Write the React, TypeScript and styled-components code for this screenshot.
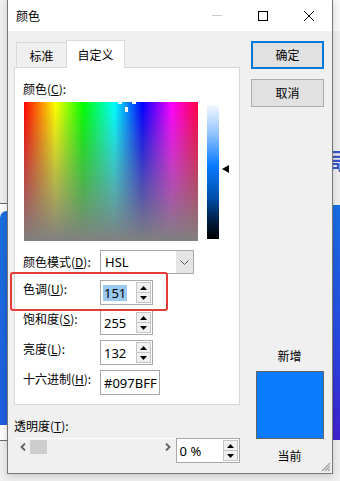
import React from 'react';
import styled, { createGlobalStyle } from 'styled-components';

const Global = createGlobalStyle`
  html, body { margin: 0; padding: 0; }
  body {
    width: 340px; height: 481px; overflow: hidden; background: #f0f0f0;
    font-family: "Noto Sans CJK SC", "Noto Sans", sans-serif;
    font-size: 12px; color: #000;
  }
  #root { width: 340px; height: 481px; }
`;

const Page = styled.div`
  display: flex;
  align-items: flex-start;
  width: 340px;
  height: 481px;
  overflow: hidden;
  background: #f0f0f0;
`;

const Strip = styled.div<{ $w: number }>`
  width: ${(p) => p.$w}px;
  flex: none;
  height: 481px;
  display: flex;
  flex-direction: column;
  overflow: hidden;
`;

const Band = styled.div<{ $h: number; $bg: string; $radius?: string }>`
  height: ${(p) => p.$h}px;
  flex: none;
  background: ${(p) => p.$bg};
  border-radius: ${(p) => p.$radius || '0'};
  overflow: hidden;
`;

const PeekGlyph = styled.div`
  margin: 116px 0 0 -9px;
  font-size: 22px;
  font-weight: 700;
  line-height: 24px;
  color: #3a56c8;
  white-space: nowrap;
`;

const Dialog = styled.div`
  position: relative;
  z-index: 1;
  flex: none;
  width: 326px;
  height: 474px;
  box-sizing: border-box;
  border: 1px solid #767676;
  border-top: 0;
  background: #f0f0f0;
  box-shadow: 0 2px 8px rgba(0, 0, 0, 0.18);
  display: flex;
  flex-direction: column;
`;

const TitleBar = styled.div`
  height: 31px;
  flex: none;
  background: #fff;
  display: flex;
  align-items: center;
  padding-left: 8px;
`;

const Title = styled.div`
  flex: 1;
  font-size: 12px;
  line-height: 16px;
`;

const WinBtn = styled.div`
  width: 46px;
  height: 31px;
  display: flex;
  align-items: center;
  justify-content: center;
`;

const Body = styled.div`
  flex: 1;
  display: flex;
`;

const LeftCol = styled.div`
  width: 232px;
  padding: 9px 0 0 6px;
  box-sizing: border-box;
  display: flex;
  flex-direction: column;
`;

const TabRow = styled.div`
  height: 27px;
  display: flex;
  align-items: flex-end;
  padding-left: 2px;
`;

const Tab = styled.div<{ $active?: boolean }>`
  position: relative;
  z-index: ${(p) => (p.$active ? 2 : 1)};
  box-sizing: border-box;
  height: ${(p) => (p.$active ? 28 : 25)}px;
  margin-bottom: ${(p) => (p.$active ? -1 : 0)}px;
  width: ${(p) => (p.$active ? 59 : 51)}px;
  margin-left: ${(p) => (p.$active ? -1 : 0)}px;
  border: 1px solid #d9d9d9;
  border-bottom: 0;
  background: ${(p) => (p.$active ? '#fff' : '#f0f0f0')};
  display: flex;
  justify-content: center;
  padding-top: ${(p) => (p.$active ? 6 : 5)}px;
  line-height: 16px;
`;

const Panel = styled.div`
  box-sizing: border-box;
  width: 226px;
  height: 338px;
  border: 1px solid #d9d9d9;
  background: #fff;
  padding: 13px 0 0 8px;
  display: flex;
  flex-direction: column;
`;

const Label = styled.div`
  line-height: 16px;
  white-space: nowrap;
`;

const SpectrumRow = styled.div`
  display: flex;
  margin-top: 5px;
`;

const Spectrum = styled.div`
  position: relative;
  width: 174px;
  height: 139px;
  margin-left: 1px;
  background: linear-gradient(to bottom, rgba(128, 128, 128, 0), rgb(128, 128, 128)),
    linear-gradient(
      to right,
      #ff0000 0%,
      #ffff00 18%,
      #00ff00 34%,
      #00ffff 52%,
      #0000ff 68%,
      #ff00ff 85%,
      #ff0040 100%
    );
`;

const MarkerBit = styled.div<{ $x: number; $y: number; $w: number; $h: number }>`
  position: absolute;
  left: ${(p) => p.$x}px;
  top: ${(p) => p.$y}px;
  width: ${(p) => p.$w}px;
  height: ${(p) => p.$h}px;
  background: #fff;
`;

const LumBar = styled.div`
  width: 12px;
  height: 134px;
  margin: 3px 0 0 9px;
  background: linear-gradient(to bottom, #f4f8ff 0%, #8ec2ff 22%, #097bff 45%, #0052b0 68%, #001a3a 88%, #000 100%);
`;

const LumArrow = styled.div`
  width: 0;
  height: 0;
  margin: 63px 0 0 3px;
  border-top: 4px solid transparent;
  border-bottom: 4px solid transparent;
  border-right: 7px solid #000;
`;

const Fields = styled.div`
  display: flex;
  flex-direction: column;
  gap: 6px;
  margin-top: 9px;
`;

const FieldRow = styled.div<{ $center?: boolean }>`
  display: flex;
  align-items: ${(p) => (p.$center ? 'center' : 'flex-start')};
  height: 24px;
`;

const FieldLabel = styled.div`
  width: 77px;
  line-height: 18px;
  white-space: nowrap;
`;

const Select = styled.div`
  box-sizing: border-box;
  width: 94px;
  height: 24px;
  border: 1px solid #a8a8a8;
  background: #fff;
  display: flex;
  align-items: stretch;
`;

const SelectValue = styled.div`
  flex: 1;
  padding-left: 4px;
  display: flex;
  align-items: center;
  font-family: "Noto Sans", sans-serif;
  font-size: 13px;
`;

const SelectBtn = styled.div`
  width: 17px;
  background: #e5e5e5;
  display: flex;
  align-items: center;
  justify-content: center;
`;

const NumBox = styled.div<{ $w: number }>`
  box-sizing: border-box;
  width: ${(p) => p.$w}px;
  height: 25px;
  border: 1px solid #a8a8a8;
  background: #fff;
  display: flex;
  align-items: center;
  padding-left: 2px;
`;

const NumText = styled.span<{ $sel?: boolean }>`
  font-family: "Noto Sans", sans-serif;
  font-size: 13px;
  line-height: 16px;
  padding: 0 1px;
  background: ${(p) => (p.$sel ? '#99c9ef' : 'transparent')};
`;

const Spin = styled.div`
  display: flex;
  flex-direction: column;
  width: 15px;
  height: 21px;
  margin-left: auto;
  margin-right: 1px;
`;

const SpinBtn = styled.div`
  flex: 1;
  box-sizing: border-box;
  border: 1px solid #c6c6c6;
  background: #f0f0f0;
  display: flex;
  align-items: center;
  justify-content: center;
  & + & { border-top: 0; }
`;

const AlphaLabel = styled.div`
  margin-top: 12px;
  line-height: 18px;
`;

const AlphaRow = styled.div`
  display: flex;
  align-items: flex-start;
  margin-top: 3px;
`;

const ScrollTrack = styled.div`
  box-sizing: border-box;
  width: 163px;
  height: 16px;
  border-top: 1px solid #fff;
  display: flex;
  align-items: center;
  padding: 0 5px 0 6px;
`;

const Thumb = styled.div`
  width: 17px;
  height: 14px;
  margin-left: 4px;
  background: #cdcdcd;
`;

const Grow = styled.div`
  flex: 1;
`;

const RightCol = styled.div`
  flex: 1;
  padding: 10px 0 8px 11px;
  display: flex;
  flex-direction: column;
`;

const Button = styled.div<{ $primary?: boolean }>`
  box-sizing: border-box;
  width: 73px;
  height: 28px;
  margin-bottom: 10px;
  background: #e1e1e1;
  border: ${(p) => (p.$primary ? '2px solid #0078d7' : '1px solid #adadad')};
  display: flex;
  align-items: center;
  justify-content: center;
  line-height: 16px;
`;

const PreviewGroup = styled.div`
  margin-top: auto;
  width: 74px;
  display: flex;
  flex-direction: column;
  align-items: center;
  padding-left: 3px;
  box-sizing: border-box;
`;

const PreviewLabel = styled.div`
  line-height: 18px;
`;

const Swatch = styled.div`
  box-sizing: border-box;
  width: 68px;
  height: 68px;
  margin: 6px 0 8px;
  border: 1px solid #646464;
  background: #097bff;
`;

const Grip = styled.svg`
  position: absolute;
  right: 1px;
  bottom: 1px;
`;

const Annotation = styled.div`
  position: absolute;
  left: 2px;
  top: 272px;
  width: 158px;
  height: 39px;
  box-sizing: border-box;
  border: 2px solid #e53b36;
  border-radius: 3px;
  pointer-events: none;
`;

const Tri = ({ up }: { up?: boolean }) => (
  <svg width="7" height="4" viewBox="0 0 7 4">
    <path d={up ? 'M0 4 L3.5 0 L7 4 Z' : 'M0 0 L3.5 4 L7 0 Z'} fill="#000" />
  </svg>
);

const Spinner = () => (
  <Spin>
    <SpinBtn>
      <Tri up />
    </SpinBtn>
    <SpinBtn>
      <Tri />
    </SpinBtn>
  </Spin>
);

const Chevron = ({ left }: { left?: boolean }) => (
  <svg width="6" height="8" viewBox="0 0 6 8">
    <path
      d={left ? 'M5 0.5 L1.5 4 L5 7.5' : 'M1 0.5 L4.5 4 L1 7.5'}
      fill="none"
      stroke="#606060"
      strokeWidth="1.8"
    />
  </svg>
);

export default function App() {
  return (
    <>
      <Global />
      <Page>
        <Strip $w={7}>
          <Band $h={203} $bg="#f0f0f0" />
          <Band $h={1} $bg="#6a6a6a" />
          <Band $h={7} $bg="#fff" />
          <Band $h={214} $bg="linear-gradient(#1a6fe0, #1f5fe0)" $radius="12px 0 0 0" />
          <Band $h={15} $bg="#fff" />
          <Band $h={1} $bg="#6a6a6a" />
          <Band $h={40} $bg="#f0f0f0" />
        </Strip>
        <Dialog>
          <TitleBar>
            <Title>颜色</Title>
            <WinBtn>
              <svg width="10" height="1" viewBox="0 0 10 1">
                <rect width="10" height="1" fill="#c8c8c8" />
              </svg>
            </WinBtn>
            <WinBtn>
              <svg width="10" height="10" viewBox="0 0 10 10">
                <rect x="0.5" y="0.5" width="9" height="9" fill="none" stroke="#000" strokeWidth="1" />
              </svg>
            </WinBtn>
            <WinBtn>
              <svg width="10" height="10" viewBox="0 0 10 10">
                <path d="M0 0 L10 10 M10 0 L0 10" stroke="#000" strokeWidth="1" />
              </svg>
            </WinBtn>
          </TitleBar>
          <Body>
            <LeftCol>
              <TabRow>
                <Tab>标准</Tab>
                <Tab $active>自定义</Tab>
              </TabRow>
              <Panel>
                <Label>
                  颜色(<u>C</u>):
                </Label>
                <SpectrumRow>
                  <Spectrum>
                    <MarkerBit $x={94} $y={0} $w={4} $h={2} />
                    <MarkerBit $x={108} $y={0} $w={4} $h={2} />
                    <MarkerBit $x={101} $y={5} $w={3} $h={5} />
                  </Spectrum>
                  <LumBar />
                  <LumArrow />
                </SpectrumRow>
                <Fields>
                  <FieldRow $center>
                    <FieldLabel>
                      颜色模式(<u>D</u>):
                    </FieldLabel>
                    <Select>
                      <SelectValue>HSL</SelectValue>
                      <SelectBtn>
                        <svg width="9" height="5" viewBox="0 0 9 5">
                          <path d="M0.5 0.5 L4.5 4.5 L8.5 0.5" fill="none" stroke="#555" strokeWidth="1" />
                        </svg>
                      </SelectBtn>
                    </Select>
                  </FieldRow>
                  <FieldRow>
                    <FieldLabel>
                      色调(<u>U</u>):
                    </FieldLabel>
                    <NumBox $w={53}>
                      <NumText $sel>151</NumText>
                      <Spinner />
                    </NumBox>
                  </FieldRow>
                  <FieldRow>
                    <FieldLabel>
                      饱和度(<u>S</u>):
                    </FieldLabel>
                    <NumBox $w={53}>
                      <NumText>255</NumText>
                      <Spinner />
                    </NumBox>
                  </FieldRow>
                  <FieldRow>
                    <FieldLabel>
                      亮度(<u>L</u>):
                    </FieldLabel>
                    <NumBox $w={53}>
                      <NumText>132</NumText>
                      <Spinner />
                    </NumBox>
                  </FieldRow>
                  <FieldRow>
                    <FieldLabel>
                      十六进制(<u>H</u>):
                    </FieldLabel>
                    <NumBox $w={60}>
                      <NumText>#097BFF</NumText>
                    </NumBox>
                  </FieldRow>
                </Fields>
              </Panel>
              <AlphaLabel>
                透明度(<u>T</u>):
              </AlphaLabel>
              <AlphaRow>
                <ScrollTrack>
                  <Chevron left />
                  <Thumb />
                  <Grow />
                  <Chevron />
                </ScrollTrack>
                <NumBox $w={65} style={{ marginLeft: 0 }}>
                  <NumText>0 %</NumText>
                  <Spinner />
                </NumBox>
              </AlphaRow>
            </LeftCol>
            <RightCol>
              <Button $primary>确定</Button>
              <Button>取消</Button>
              <PreviewGroup>
                <PreviewLabel>新增</PreviewLabel>
                <Swatch />
                <PreviewLabel>当前</PreviewLabel>
              </PreviewGroup>
            </RightCol>
          </Body>
          <Annotation />
          <Grip width="10" height="10" viewBox="0 0 10 10">
            <path d="M9 1 L1 9 M9 4 L4 9 M9 7 L7 9" stroke="#a0a0a0" strokeWidth="1.2" />
          </Grip>
        </Dialog>
        <Strip $w={7}>
          <Band $h={31} $bg="#fafafa" />
          <Band $h={174} $bg="#f0f0f0">
            <PeekGlyph>局</PeekGlyph>
          </Band>
          <Band $h={235} $bg="linear-gradient(#1a6fe6, #2a48e0 60%, #4020d0)" />
          <Band $h={41} $bg="#f0f0f0" />
        </Strip>
      </Page>
    </>
  );
}
